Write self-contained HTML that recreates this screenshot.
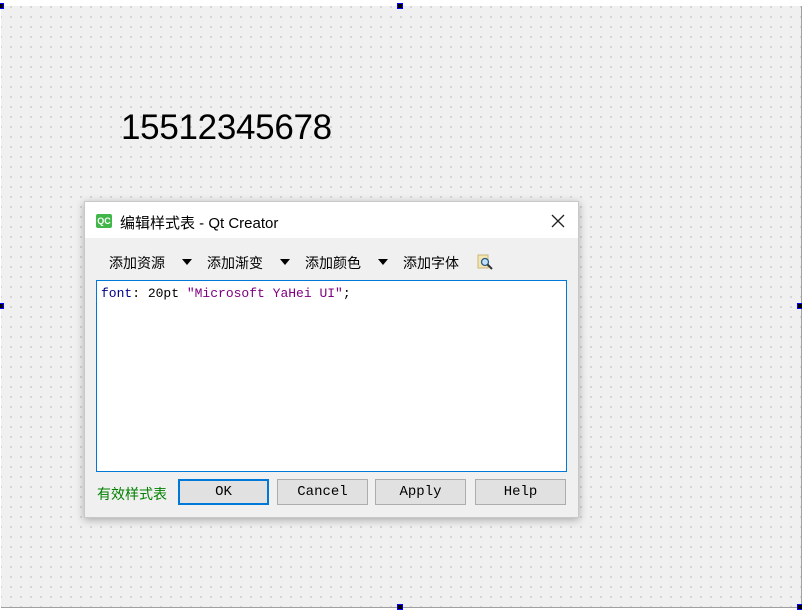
<!DOCTYPE html>
<html><head><meta charset="utf-8"><style>
body{margin:0;width:802px;height:611px;background:#fff;position:relative;overflow:hidden;font-family:"Liberation Sans","Noto Sans CJK SC",sans-serif}
#canvas{position:absolute;left:1px;top:6px;width:800px;height:601px;background-color:#f0f0f0;
background-image:radial-gradient(circle,#9a9a9a 0.7px,transparent 0.8px);background-size:10px 10px;background-position:5px -4px;border-right:1px solid #a0a0a0;border-bottom:1px solid #a0a0a0}
.h{position:absolute;width:4px;height:4px;background:#000;border:1px solid #00f}
#num{position:absolute;left:121px;top:108px;font-size:35px;color:#000;letter-spacing:-0.3px}
#dlg{position:absolute;left:84px;top:201px;width:493px;height:315px;background:#f0f0f0;border:1px solid #c8c8c8;box-shadow:0 2px 8px rgba(0,0,0,.3)}
#title{height:36px;background:#fff;position:relative}
#title .t{position:absolute;left:35px;top:10px;font-size:15px;color:#000}
.qc{position:absolute;left:11px;top:12px;width:16px;height:14px;background:#41b649;border-radius:2px;color:#fff;font-size:9px;font-weight:bold;line-height:14px;text-align:center}
.tb{position:absolute;top:51px;font-size:14px;color:#000}
.ar{position:absolute;top:57px;width:0;height:0;border-left:5px solid transparent;border-right:5px solid transparent;border-top:6px solid #000}
#edit{position:absolute;left:11px;top:78px;width:471px;height:192px;background:#fff;border:1px solid #0078d7;font-family:"Liberation Mono",monospace;font-size:13px;padding:5px 0 0 4px;box-sizing:border-box}
.b{position:absolute;top:277px;height:26px;width:91px;box-sizing:border-box;border:1px solid #adadad;background:#e1e1e1;font-family:"Liberation Mono",monospace;font-size:14px;text-align:center;line-height:24px}
</style></head><body>
<div id="canvas"></div>
<div class="h" style="left:-2px;top:3px"></div>
<div class="h" style="left:397px;top:3px"></div>
<div class="h" style="left:797px;top:303px"></div>
<div class="h" style="left:-2px;top:303px"></div>
<div class="h" style="left:397px;top:604px"></div>
<div class="h" style="left:797px;top:604px"></div>
<div id="num">15512345678</div>
<div id="dlg">
<div id="title"><div class="qc">QC</div><div class="t">编辑样式表 - Qt Creator</div>
<svg width="14" height="14" style="position:absolute;top:12px;left:466px" viewBox="0 0 14 14"><path d="M1 1L13 13M13 1L1 13" stroke="#222" stroke-width="1.3"/></svg></div>
<div class="tb" style="left:24px">添加资源</div><div class="ar" style="left:97px"></div>
<div class="tb" style="left:122px">添加渐变</div><div class="ar" style="left:195px"></div>
<div class="tb" style="left:220px">添加颜色</div><div class="ar" style="left:293px"></div>
<div class="tb" style="left:318px">添加字体</div>
<svg style="position:absolute;left:392px;top:52px" width="16" height="16" viewBox="0 0 16 16"><rect x="1" y="1" width="10" height="13" fill="#f3e6b0" stroke="#c9b77a"/><circle cx="8" cy="8" r="3.5" fill="#bfe0f5" stroke="#2a5a8a" stroke-width="1.3"/><path d="M10.5 10.5L15 15" stroke="#333" stroke-width="2"/></svg>
<div id="edit"><span style="color:#00008b">font</span>: 20pt <span style="color:#800080">"Microsoft YaHei UI"</span>;</div>
<div style="position:absolute;left:12px;top:282px;font-size:14px;color:#008000">有效样式表</div>
<div class="b" style="left:93px;border:2px solid #0078d7;line-height:22px">OK</div>
<div class="b" style="left:192px">Cancel</div>
<div class="b" style="left:290px">Apply</div>
<div class="b" style="left:390px">Help</div>
</div>
</body></html>
